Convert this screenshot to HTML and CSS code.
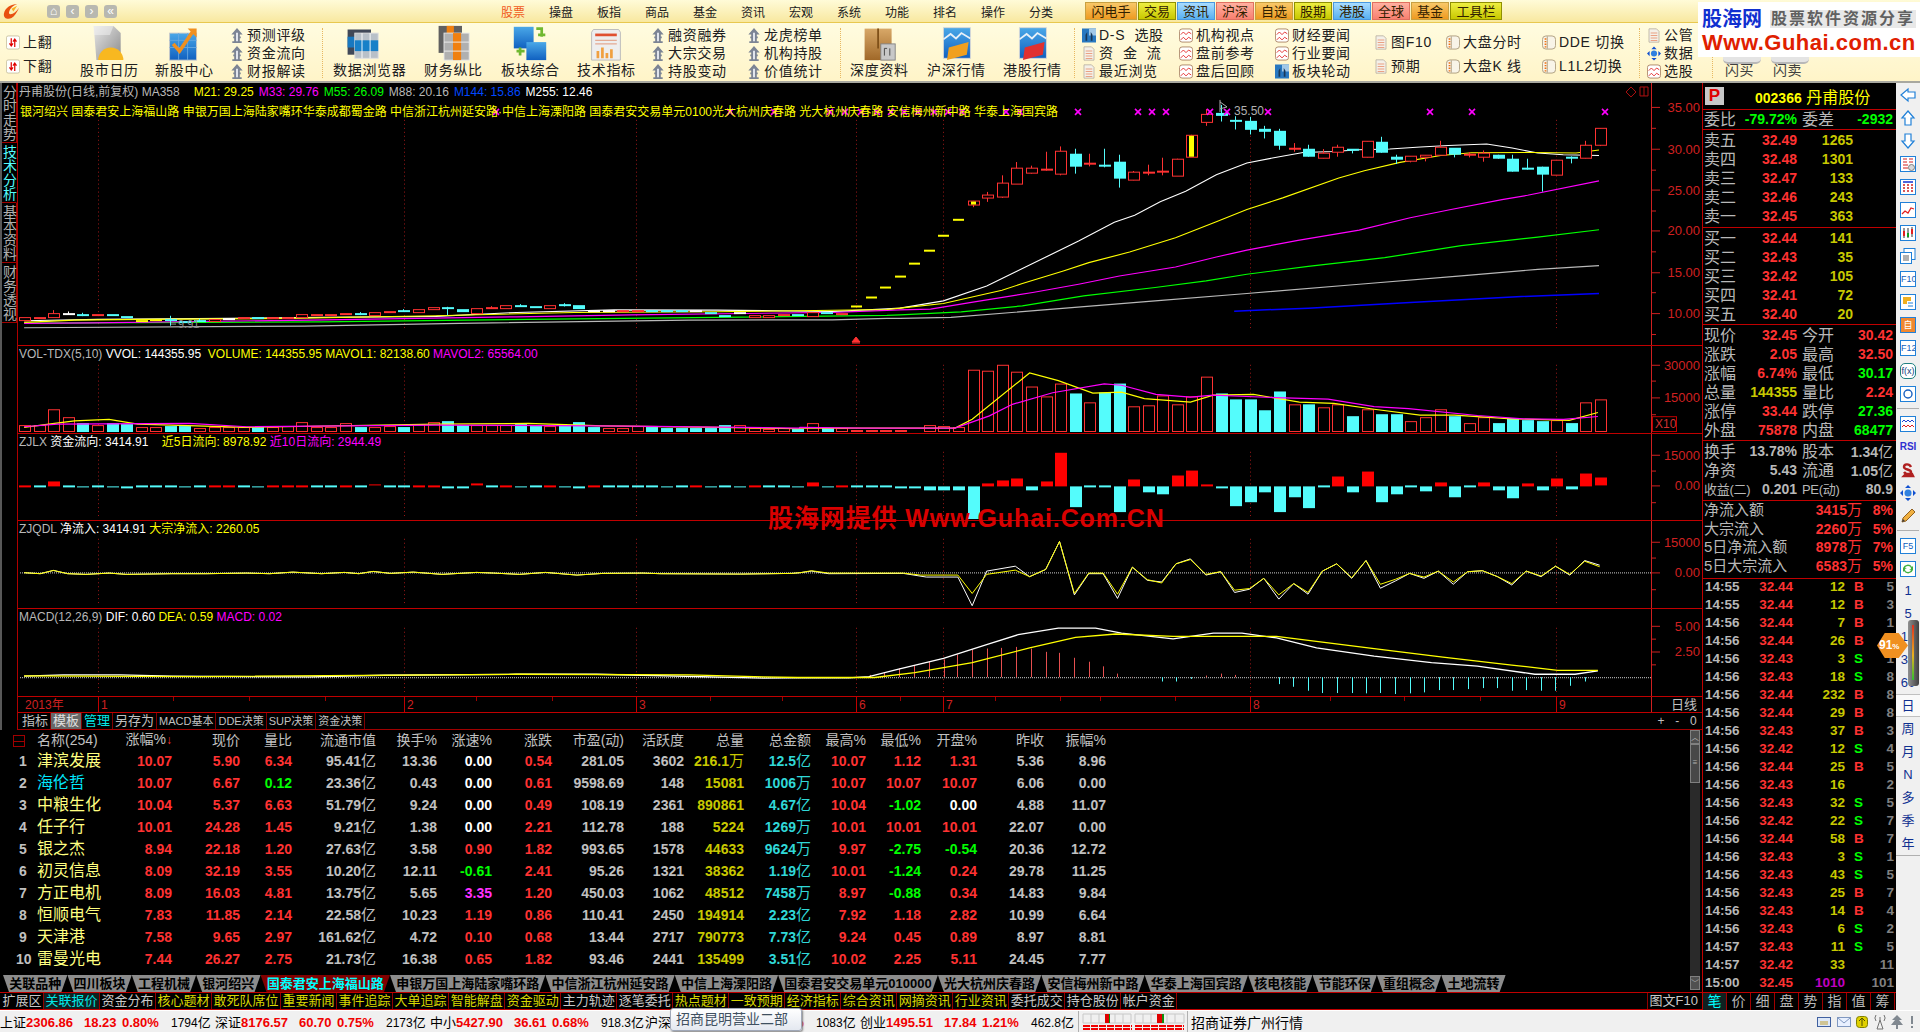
FILE: index.html
```html
<!DOCTYPE html>
<html lang="zh-CN">
<head>
<meta charset="utf-8">
<title>丹甫股份</title>
<link rel="stylesheet" href="styles.css">
</head>
<body>
<svg class="defs" width="0" height="0">
  <defs>
    <linearGradient id="gBlue" x1="0" y1="0" x2="0" y2="1"><stop offset="0" stop-color="#4aa8e8"/><stop offset="1" stop-color="#1060c0"/></linearGradient>
    <linearGradient id="gGray" x1="0" y1="0" x2="1" y2="1"><stop offset="0" stop-color="#e8e8e8"/><stop offset="1" stop-color="#8a8a8a"/></linearGradient>
    <linearGradient id="gBrown" x1="0" y1="0" x2="0" y2="1"><stop offset="0" stop-color="#d8a868"/><stop offset="1" stop-color="#a06828"/></linearGradient>
    <symbol id="tower" viewBox="0 0 14 16"><path d="M7 0 1 7h3v2H3v2h1v3H2v2h10v-2h-2v-3h1V9h-1V7h3z" fill="#7c8494"/><path d="M6 5h2v9H6z" fill="#e8ecf4"/></symbol>
    <symbol id="flip" viewBox="0 0 16 16"><rect x=".5" y=".5" width="15" height="15" rx="2" fill="#fff" stroke="#c8c0a0"/><path d="M6 3v8M4 9l2 3 2-3M10 13V5M8 7l2-3 2 3" fill="none" stroke="#e00000" stroke-width="1.4"/></symbol>
    <symbol id="doc" viewBox="0 0 16 18"><path d="M2 1h9l3 3v13H2z" fill="#f4f0e8" stroke="#b8b0a0"/><path d="M4 6h8M4 9h8M4 12h8M4 15h8" stroke="#e89070"/></symbol>
    <symbol id="rchart" viewBox="0 0 16 16"><rect x=".5" y=".5" width="15" height="15" rx="3" fill="#fff" stroke="#a88060"/><path d="M2 7l3-3 3 3 3-3 3 2M2 13l3-3 3 3 3-3 3 2" fill="none" stroke="#e02020"/></symbol>
    <symbol id="bino" viewBox="0 0 16 16"><rect width="16" height="16" fill="#2878c0"/><rect x="8" width="8" height="8" fill="#a0c8e8"/><path d="M4 14V7l2-3v10zM10 14V4l2 3v7z" fill="#183858"/></symbol>
    <symbol id="pill" viewBox="0 0 16 16"><rect x=".5" y=".5" width="15" height="15" rx="4" fill="#f8f4e8" stroke="#a89878"/><path d="M6 1v14" stroke="#a89878"/><path d="M3 4h2M3 7h2M3 10h2M3 13h2" stroke="#f07010" stroke-width="1.5"/></symbol>
    <symbol id="i-left" viewBox="0 0 16 16"><path d="M1 8l7-6v3h7v6H8v3z" fill="#fff" stroke="#2080d8" stroke-width="1.2"/></symbol>
    <symbol id="i-up" viewBox="0 0 16 16"><path d="M8 1l6 7h-3v7H5V8H2z" fill="#fff" stroke="#2080d8" stroke-width="1.2"/></symbol>
    <symbol id="i-down" viewBox="0 0 16 16"><path d="M8 15l6-7h-3V1H5v7H2z" fill="#fff" stroke="#2080d8" stroke-width="1.2"/></symbol>
    <symbol id="i-tabc" viewBox="0 0 16 16"><rect x=".5" y=".5" width="15" height="15" fill="#fff" stroke="#2080d8"/><path d="M3 3h4M9 3h4M3 6h4M9 6h4M3 9h5M3 12h5" stroke="#d02020"/><circle cx="11.500" cy="11.500" r="3" fill="#d8d8d8" stroke="#808080"/></symbol>
    <symbol id="i-list" viewBox="0 0 16 16"><rect x=".5" y=".5" width="15" height="15" fill="#fff" stroke="#2080d8"/><path d="M3 3h10" stroke="#1030d0" stroke-width="1.5"/><path d="M3 6h2M7 6h2M11 6h2M3 9h2M7 9h2M11 9h2M3 12h2M7 12h2M11 12h2" stroke="#d02020" stroke-width="1.5"/></symbol>
    <symbol id="i-line" viewBox="0 0 16 16"><rect x=".5" y=".5" width="15" height="15" fill="#fff" stroke="#2080d8"/><path d="M2 12l3-3 3 2 3-5 3 1" fill="none" stroke="#e02020" stroke-width="1.3"/></symbol>
    <symbol id="i-cand" viewBox="0 0 16 16"><rect x=".5" y=".5" width="15" height="15" fill="#fff" stroke="#2080d8"/><path d="M4 3v10M8 3v10M12 2v10" stroke="#303030"/><rect x="3" y="6" width="2" height="5" fill="#e02020"/><rect x="7" y="8" width="2" height="4" fill="#10a020"/><rect x="11" y="4" width="2" height="5" fill="#e02020"/></symbol>
    <symbol id="i-docs" viewBox="0 0 16 16"><rect x="4" y=".5" width="11" height="11" fill="#fff" stroke="#2080d8"/><rect x=".5" y="4.500" width="11" height="11" fill="#fff" stroke="#2080d8"/><path d="M3 8h6M3 10h6M3 12h6" stroke="#606060"/></symbol>
    <symbol id="i-yel" viewBox="0 0 16 16"><rect x=".5" y=".5" width="15" height="15" fill="#fff" stroke="#2080d8"/><path d="M3 3h8v4H7v3H3z" fill="#f0b020"/><path d="M8 9h5M8 12h5" stroke="#2080d8"/></symbol>
    <symbol id="i-circle" viewBox="0 0 16 16"><rect x=".5" y=".5" width="15" height="15" fill="#fff" stroke="#2080d8"/><circle cx="8" cy="8" r="4" fill="none" stroke="#1860c0" stroke-width="1.400"/></symbol>
    <symbol id="i-wave" viewBox="0 0 16 16"><rect x=".5" y=".5" width="15" height="15" fill="#fff" stroke="#2080d8"/><path d="M2 6l2-2 2 2 2-2 2 2 2-2 2 2" fill="none" stroke="#2040d0"/><path d="M2 11l2-2 2 2 2-2 2 2 2-2 2 2" fill="none" stroke="#e02020"/></symbol>
    <symbol id="i-dollar" viewBox="0 0 16 16"><path d="M4 14h9l-1-2H6zM11 5C9 1 4 2 4 5s7 2 7 5-5 3-7 0" fill="none" stroke="#b02020" stroke-width="2.400"/></symbol>
    <symbol id="i-move" viewBox="0 0 16 16"><path d="M8 0l3 3H5zM8 16l-3-3h6zM0 8l3-3v6zM16 8l-3 3V5z" fill="#1050d0"/><circle cx="8" cy="8" r="3.500" fill="#3080e0"/></symbol>
    <symbol id="i-pen" viewBox="0 0 16 16"><path d="M2 14l1-4L12 1l3 3-9 9z" fill="#f0b040" stroke="#906020"/><path d="M2 14l1-3 2 2z" fill="#404040"/></symbol>
    <symbol id="i-refresh" viewBox="0 0 16 16"><rect x=".5" y=".5" width="15" height="15" fill="#fff" stroke="#2080d8"/><path d="M3 7a5 5 0 0 1 9-1l1-1v4H9l2-1a3 3 0 0 0-6 0zM13 9a5 5 0 0 1-9 1l-1 1V7h4L5 8a3 3 0 0 0 6 0z" fill="#40b040"/></symbol>
  </defs>
</svg>

<div class="app">
  <header class="titlebar">
    <div class="brand">
      <svg class="logo" viewBox="0 0 18 18"><path d="M15 1C9 1 2 5 1 11c-1 5 4 7 8 5 3-2 6-6 8-11-3 4-6 7-9 7-2 0-2-2-1-4 1-3 5-6 8-7z" fill="#e85010"/><path d="M9 6l6-3-4 6z" fill="#f8b020"/></svg>
      <div class="navbtns">
        <span class="navbtn">⌂</span><span class="navbtn">‹</span><span class="navbtn">›</span><span class="navbtn">«</span>
      </div>
    </div>
    <nav class="menu">
      <a class="on">股票</a><a>操盘</a><a>板指</a><a>商品</a><a>基金</a><a>资讯</a><a>宏观</a><a>系统</a><a>功能</a><a>排名</a><a>操作</a><a>分类</a>
    </nav>
    <div class="quick">
      <a class="qk o w52">闪电手</a><a class="qk y">交易</a><a class="qk b">资讯</a><a class="qk p">沪深</a><a class="qk o">自选</a><a class="qk y">股期</a><a class="qk b">港股</a><a class="qk p">全球</a><a class="qk o">基金</a><a class="qk y w52">工具栏</a>
    </div>
  </header>

  <section class="toolbar">
    <div class="tstack two">
      <a class="titem"><svg class="sm"><use href="#flip"/></svg>上翻</a>
      <a class="titem"><svg class="sm"><use href="#flip"/></svg>下翻</a>
    </div>
    <a class="big"><svg viewBox="0 0 40 38"><path d="M3 0h22l8 8v30H6z" fill="url(#gGray)"/><path d="M3 0h22l-4 10-18 0z" fill="#f4f4f4" opacity=".5"/><path d="M8 38a14 14 0 0 1 28 0z" fill="#f8b820"/></svg><span>股市日历</span></a>
    <a class="big"><svg viewBox="0 0 40 38"><rect x="4" y="8" width="30" height="30" fill="url(#gBlue)" stroke="#c8c8c8"/><path d="M4 16h30M4 24h30M14 8v30M24 8v30" stroke="#68a8e0"/><path d="M8 20l7 8L30 6" fill="none" stroke="#f09020" stroke-width="4"/><path d="M24 3h10v10z" fill="#f09020"/></svg><span>新股中心</span></a>
    <div class="tstack">
      <a class="titem"><svg class="sm"><use href="#tower"/></svg>预测评级</a>
      <a class="titem"><svg class="sm"><use href="#tower"/></svg>资金流向</a>
      <a class="titem"><svg class="sm"><use href="#tower"/></svg>财报解读</a>
    </div>
    <i class="sep"></i>
    <a class="big"><svg viewBox="0 0 40 38"><rect x="4" y="4" width="26" height="28" fill="#404858"/><rect x="4" y="12" width="10" height="12" fill="#1878c0"/><rect x="12" y="8" width="26" height="28" fill="#b8c0c8" stroke="#e0e0e0"/><rect x="12" y="16" width="26" height="12" fill="#1880c8"/><path d="M20 8v28M29 8v28" stroke="#fff"/></svg><span>数据浏览器</span></a>
    <a class="big"><svg viewBox="0 0 40 38"><rect x="4" y="0" width="26" height="30" fill="#606060"/><rect x="13" y="0" width="8" height="30" fill="#f08010"/><rect x="10" y="8" width="28" height="30" fill="#b0b0b0" stroke="#e8e8e8"/><rect x="20" y="8" width="9" height="30" fill="#f08010"/><path d="M10 18h28M10 28h28" stroke="#f0f0f0"/></svg><span>财务纵比</span></a>
    <a class="big"><svg viewBox="0 0 40 38"><rect x="2" y="1" width="22" height="24" fill="url(#gBlue)"/><rect x="16" y="18" width="22" height="20" fill="url(#gBlue)"/><path d="M27 3h6v9M29 10h8M5 28h9M9 24v9" fill="none" stroke="#70b830" stroke-width="3"/></svg><span>板块综合</span></a>
    <a class="big"><svg viewBox="0 0 40 38"><path d="M6 4h28l2 3v31H4V7z" fill="#eee" stroke="#b8b8b8"/><path d="M8 10h24" stroke="#e05030" stroke-width="3"/><path d="M8 16h24M8 20h24" stroke="#e09070"/><path d="M11 36v-8M16 36v-12M21 36v-6M26 36v-10" stroke="#f0a040" stroke-width="3"/></svg><span>技术指标</span></a>
    <div class="tstack">
      <a class="titem"><svg class="sm"><use href="#tower"/></svg>融资融券</a>
      <a class="titem"><svg class="sm"><use href="#tower"/></svg>大宗交易</a>
      <a class="titem"><svg class="sm"><use href="#tower"/></svg>持股变动</a>
    </div>
    <div class="tstack">
      <a class="titem"><svg class="sm"><use href="#tower"/></svg>龙虎榜单</a>
      <a class="titem"><svg class="sm"><use href="#tower"/></svg>机构持股</a>
      <a class="titem"><svg class="sm"><use href="#tower"/></svg>价值统计</a>
    </div>
    <i class="sep"></i>
    <a class="big"><svg viewBox="0 0 40 38"><rect x="4" y="3" width="30" height="35" fill="url(#gBrown)"/><path d="M19 3v22" stroke="#805018" stroke-width="2"/><rect x="22" y="20" width="16" height="18" fill="#c8c8c8" stroke="#808080"/><path d="M26 25h3M26 25v8M32 25v8" stroke="#404040"/></svg><span>深度资料</span></a>
    <a class="big"><svg viewBox="0 0 40 38"><rect x="6" y="2" width="30" height="34" fill="url(#gBlue)" stroke="#d8d8d8"/><path d="M6 15l8-6 6 5 6-6 10 6" fill="none" stroke="#e8f0f8" stroke-width="2"/><path d="M12 24l22-6-2 14-22 6z" fill="#f0a020"/></svg><span>沪深行情</span></a>
    <a class="big"><svg viewBox="0 0 40 38"><rect x="6" y="2" width="30" height="34" fill="url(#gBlue)" stroke="#d8d8d8"/><path d="M6 15l8-6 6 5 6-6 10 6" fill="none" stroke="#e8f0f8" stroke-width="2"/><path d="M12 24l22-6-2 14-22 6z" fill="#e03030"/></svg><span>港股行情</span></a>
    <i class="sep"></i>
    <div class="tstack">
      <a class="titem"><svg class="sm"><use href="#bino"/></svg>D-S&nbsp; 选股</a>
      <a class="titem"><svg class="sm"><use href="#doc"/></svg>资&nbsp; 金&nbsp; 流</a>
      <a class="titem"><svg class="sm"><use href="#doc"/></svg>最近浏览</a>
    </div>
    <div class="tstack">
      <a class="titem"><svg class="sm"><use href="#rchart"/></svg>机构视点</a>
      <a class="titem"><svg class="sm"><use href="#rchart"/></svg>盘前参考</a>
      <a class="titem"><svg class="sm"><use href="#rchart"/></svg>盘后回顾</a>
    </div>
    <div class="tstack">
      <a class="titem"><svg class="sm"><use href="#rchart"/></svg>财经要闻</a>
      <a class="titem"><svg class="sm"><use href="#rchart"/></svg>行业要闻</a>
      <a class="titem"><svg class="sm"><use href="#bino"/></svg>板块轮动</a>
    </div>
    <div class="tstack two">
      <a class="titem"><svg class="sm"><use href="#doc"/></svg>图F10</a>
      <a class="titem"><svg class="sm"><use href="#doc"/></svg>预期</a>
    </div>
    <div class="tstack two">
      <a class="titem"><svg class="sm"><use href="#pill"/></svg>大盘分时</a>
      <a class="titem"><svg class="sm"><use href="#pill"/></svg>大盘K 线</a>
    </div>
    <div class="tstack two">
      <a class="titem"><svg class="sm"><use href="#pill"/></svg>DDE&nbsp;切换</a>
      <a class="titem"><svg class="sm"><use href="#pill"/></svg>L1L2切换</a>
    </div>
    <i class="sep"></i>
    <div class="tstack">
      <a class="titem"><svg class="sm"><use href="#doc"/></svg>公管</a>
      <a class="titem"><svg class="sm"><use href="#i-move"/></svg>数据</a>
      <a class="titem"><svg class="sm"><use href="#rchart"/></svg>选股</a>
    </div>
    <i class="sep"></i>
    <a class="flash">闪买</a>
    <a class="flash">闪卖</a>
  </section>

  <aside class="sitelogo">
    <div class="site-top"><b>股海网</b><span>股票软件资源分享</span></div>
    <div class="site-url">Www.Guhai.com.cn</div>
  </aside>

  <main class="workspace">
    <div class="leftcol">
      <div class="chartrow">
        <div class="sidetabs">
          <a>分时走势</a><a class="on">技术分析</a><a>基本资料</a><a>财务透视</a>
        </div>
        <div class="charts">
          <section class="panel p-main">
            <svg id="cMain" viewBox="18 83 1684 263" preserveAspectRatio="none"></svg>
            <div class="ptitle t1"><span class="gray">丹甫股份(日线,前复权) MA358</span><span class="yel a1">M21: 29.25</span><span class="mag a2">M33: 29.76</span><span class="grn a2">M55: 26.09</span><span class="gray a2">M88: 20.16</span><span class="blu a2">M144: 15.86</span><span class="whi a3">M255: 12.46</span></div>
            <div class="ptitle t2 yel">银河绍兴 国泰君安上海福山路 申银万国上海陆家嘴环华泰成都蜀金路 中信浙江杭州延安路·中信上海溧阳路 国泰君安交易单元0100光大杭州庆春路 光大杭州庆春路 安信梅州新中路 华泰上海国宾路</div>
          </section>
          <section class="panel p-sub">
            <svg id="cVol" viewBox="18 346 1684 88" preserveAspectRatio="none"></svg>
            <div class="ptitle"><span class="gray">VOL-TDX(5,10)</span> <span class="whi">VVOL: 144355.95</span> &nbsp;<span class="yel">VOLUME: 144355.95</span> <span class="yel">MAVOL1: 82138.60</span> <span class="mag">MAVOL2: 65564.00</span></div>
          </section>
          <section class="panel p-sub p-87">
            <svg id="cZjlx" viewBox="18 434 1684 87" preserveAspectRatio="none"></svg>
            <div class="ptitle"><span class="gray">ZJLX</span> <span class="whi">资金流向: 3414.91</span> &nbsp; &nbsp;<span class="yel">近5日流向: 8978.92</span> <span class="mag">近10日流向: 2944.49</span></div>
          </section>
          <section class="panel p-sub">
            <svg id="cZjqdl" viewBox="18 521 1684 88" preserveAspectRatio="none"></svg>
            <div class="ptitle"><span class="gray">ZJQDL</span> <span class="whi">净流入: 3414.91</span> <span class="yel">大宗净流入: 2260.05</span></div>
          </section>
          <section class="panel p-sub">
            <svg id="cMacd" viewBox="18 609 1684 88" preserveAspectRatio="none"></svg>
            <div class="ptitle"><span class="gray">MACD(12,26,9)</span> <span class="whi">DIF: 0.60</span> <span class="yel">DEA: 0.59</span> <span class="mag">MACD: 0.02</span></div>
          </section>
          <section class="dateaxis">
            <svg id="cDate" viewBox="18 697 1684 15" preserveAspectRatio="none"></svg>
          </section>
          <section class="tplbar">
            <a>指标</a><a class="sel">模板</a><a class="cy">管理</a><a>另存为</a><a class="tiny">MACD基本</a><a class="tiny">DDE决策</a><a class="tiny">SUP决策</a><a class="tiny">资金决策</a>
            <div class="tplctl"><span>+</span><span>-</span><span>0</span></div>
          </section>
        </div>
      </div>

      <div class="tablearea">
        <div class="tablecol">
          <table class="rank">
            <thead>
              <tr><th><i class="boxico"></i></th><th>名称(254)</th><th>涨幅%<em>↓</em></th><th>现价</th><th>量比</th><th>流通市值</th><th>换手%</th><th>涨速%</th><th>涨跌</th><th>市盈(动)</th><th>活跃度</th><th>总量</th><th>总金额</th><th>最高%</th><th>最低%</th><th>开盘%</th><th>昨收</th><th>振幅%</th></tr>
            </thead>
            <tbody>
              <tr><td>1</td><td>津滨发展</td><td>10.07</td><td>5.90</td><td>6.34</td><td>95.41<i>亿</i></td><td>13.36</td><td>0.00</td><td>0.54</td><td>281.05</td><td>3602</td><td>216.1<i>万</i></td><td>12.5<i>亿</i></td><td>10.07</td><td>1.12</td><td>1.31</td><td>5.36</td><td>8.96</td></tr>
              <tr><td>2</td><td class="cy">海伦哲</td><td>10.07</td><td>6.67</td><td class="gn">0.12</td><td>23.36<i>亿</i></td><td>0.43</td><td>0.00</td><td>0.61</td><td>9598.69</td><td>148</td><td>15081</td><td>1006<i>万</i></td><td>10.07</td><td>10.07</td><td>10.07</td><td>6.06</td><td>0.00</td></tr>
              <tr><td>3</td><td>中粮生化</td><td>10.04</td><td>5.37</td><td>6.63</td><td>51.79<i>亿</i></td><td>9.24</td><td>0.00</td><td>0.49</td><td>108.19</td><td>2361</td><td>890861</td><td>4.67<i>亿</i></td><td>10.04</td><td class="gn">-1.02</td><td class="wh">0.00</td><td>4.88</td><td>11.07</td></tr>
              <tr><td>4</td><td>任子行</td><td>10.01</td><td>24.28</td><td>1.45</td><td>9.21<i>亿</i></td><td>1.38</td><td>0.00</td><td>2.21</td><td>112.78</td><td>188</td><td>5224</td><td>1269<i>万</i></td><td>10.01</td><td>10.01</td><td>10.01</td><td>22.07</td><td>0.00</td></tr>
              <tr><td>5</td><td>银之杰</td><td>8.94</td><td>22.18</td><td>1.20</td><td>27.63<i>亿</i></td><td>3.58</td><td class="rd">0.90</td><td>1.82</td><td>993.65</td><td>1578</td><td>44633</td><td>9624<i>万</i></td><td>9.97</td><td class="gn">-2.75</td><td class="gn">-0.54</td><td>20.36</td><td>12.72</td></tr>
              <tr><td>6</td><td>初灵信息</td><td>8.09</td><td>32.19</td><td>3.55</td><td>10.20<i>亿</i></td><td>12.11</td><td class="gn">-0.61</td><td>2.41</td><td>95.26</td><td>1321</td><td>38362</td><td>1.19<i>亿</i></td><td>10.01</td><td class="gn">-1.24</td><td>0.24</td><td>29.78</td><td>11.25</td></tr>
              <tr><td>7</td><td>方正电机</td><td>8.09</td><td>16.03</td><td>4.81</td><td>13.75<i>亿</i></td><td>5.65</td><td class="mg">3.35</td><td>1.20</td><td>450.03</td><td>1062</td><td>48512</td><td>7458<i>万</i></td><td>8.97</td><td class="gn">-0.88</td><td>0.34</td><td>14.83</td><td>9.84</td></tr>
              <tr><td>8</td><td>恒顺电气</td><td>7.83</td><td>11.85</td><td>2.14</td><td>22.58<i>亿</i></td><td>10.23</td><td class="rd">1.19</td><td>0.86</td><td>110.41</td><td>2450</td><td>194914</td><td>2.23<i>亿</i></td><td>7.92</td><td>1.18</td><td>2.82</td><td>10.99</td><td>6.64</td></tr>
              <tr><td>9</td><td>天津港</td><td>7.58</td><td>9.65</td><td>2.97</td><td>161.62<i>亿</i></td><td>4.72</td><td class="rd">0.10</td><td>0.68</td><td>13.44</td><td>2717</td><td>790773</td><td>7.73<i>亿</i></td><td>9.24</td><td>0.45</td><td>0.89</td><td>8.97</td><td>8.81</td></tr>
              <tr><td>10</td><td>雷曼光电</td><td>7.44</td><td>26.27</td><td>2.75</td><td>21.73<i>亿</i></td><td>16.38</td><td class="rd">0.65</td><td>1.82</td><td>93.46</td><td>2441</td><td>135499</td><td>3.51<i>亿</i></td><td>10.02</td><td>2.25</td><td>5.11</td><td>24.45</td><td>7.77</td></tr>
            </tbody>
          </table>
          <nav class="sheets">
            <a>关联品种</a><a>四川板块</a><a>工程机械</a><a>银河绍兴</a><a class="on">国泰君安上海福山路</a><a>申银万国上海陆家嘴环路</a><a>中信浙江杭州延安路</a><a>中信上海溧阳路</a><a>国泰君安交易单元010000</a><a>光大杭州庆春路</a><a>安信梅州新中路</a><a>华泰上海国宾路</a><a>核电核能</a><a>节能环保</a><a>重组概念</a><a>土地流转</a>
          </nav>
        </div>
        <div class="vscroll"><span class="sb-btn">︿</span><span class="sb-thumb">≡</span><span class="sb-fill"></span><span class="sb-btn">﹀</span></div>
      </div>

      <nav class="extbar">
        <a class="l">扩展区</a><a class="cy">关联报价</a><a class="l">资金分布</a><a>核心题材</a><a>敢死队席位</a><a>重要新闻</a><a>事件追踪</a><a>大单追踪</a><a>智能解盘</a><a>资金驱动</a><a class="l">主力轨迹</a><a class="l">逐笔委托</a><a>热点题材</a><a>一致预期</a><a>经济指标</a><a>综合资讯</a><a>网摘资讯</a><a>行业资讯</a><a class="l">委托成交</a><a class="l">持仓股份</a><a class="l">帐户资金</a>
        <span class="extgap"></span>
        <a class="l f10">图文F10</a>
      </nav>
    </div>

    <aside class="quote">
      <div class="q-head"><span class="pico">P</span><span class="q-name"><b>002366</b> 丹甫股份</span></div>
      <div class="q-ratio"><span>委比</span><b class="gn">-79.72%</b><span>委差</span><b class="gn">-2932</b></div>
      <div class="q-block b1">
        <div class="book"><span>卖五</span><b class="rd">32.49</b><b class="ye">1265</b></div>
        <div class="book"><span>卖四</span><b class="rd">32.48</b><b class="ye">1301</b></div>
        <div class="book"><span>卖三</span><b class="rd">32.47</b><b class="ye">133</b></div>
        <div class="book"><span>卖二</span><b class="rd">32.46</b><b class="ye">243</b></div>
        <div class="book"><span>卖一</span><b class="rd">32.45</b><b class="ye">363</b></div>
      </div>
      <div class="q-block">
        <div class="book"><span>买一</span><b class="rd">32.44</b><b class="ye">141</b></div>
        <div class="book"><span>买二</span><b class="rd">32.43</b><b class="ye">35</b></div>
        <div class="book"><span>买三</span><b class="rd">32.42</b><b class="ye">105</b></div>
        <div class="book"><span>买四</span><b class="rd">32.41</b><b class="ye">72</b></div>
        <div class="book"><span>买五</span><b class="rd">32.40</b><b class="ye">20</b></div>
      </div>
      <div class="q-block">
        <div class="stat"><span>现价</span><b class="rd">32.45</b><span>今开</span><b class="rd">30.42</b></div>
        <div class="stat"><span>涨跌</span><b class="rd">2.05</b><span>最高</span><b class="rd">32.50</b></div>
        <div class="stat"><span>涨幅</span><b class="rd">6.74%</b><span>最低</span><b class="gn">30.17</b></div>
        <div class="stat"><span>总量</span><b class="ye">144355</b><span>量比</span><b class="rd">2.24</b></div>
        <div class="stat"><span>涨停</span><b class="rd">33.44</b><span>跌停</span><b class="gn">27.36</b></div>
        <div class="stat"><span>外盘</span><b class="rd">75878</b><span>内盘</span><b class="gn">68477</b></div>
      </div>
      <div class="q-block q-gray">
        <div class="stat"><span>换手</span><b>13.78%</b><span>股本</span><b>1.34<i>亿</i></b></div>
        <div class="stat"><span>净资</span><b>5.43</b><span>流通</span><b>1.05<i>亿</i></b></div>
        <div class="stat"><span class="nar">收益(二)</span><b>0.201</b><span class="nar">PE(动)</span><b>80.9</b></div>
      </div>
      <div class="q-block q-fund">
        <div class="fund"><span>净流入额</span><b class="rd">3415<i>万</i></b><b class="rd">8%</b></div>
        <div class="fund"><span>大宗流入</span><b class="rd">2260<i>万</i></b><b class="rd">5%</b></div>
        <div class="fund"><span>5日净流入额</span><b class="rd">8978<i>万</i></b><b class="rd">7%</b></div>
        <div class="fund"><span>5日大宗流入</span><b class="rd">6583<i>万</i></b><b class="rd">5%</b></div>
      </div>
      <div class="ticks">
        <div class="tick"><span>14:55</span><b>32.44</b><em>12</em><u class="bb">B</u><s>5</s></div>
        <div class="tick"><span>14:55</span><b>32.44</b><em>12</em><u class="bb">B</u><s>3</s></div>
        <div class="tick"><span>14:56</span><b>32.44</b><em>7</em><u class="bb">B</u><s>1</s></div>
        <div class="tick"><span>14:56</span><b>32.44</b><em>26</em><u class="bb">B</u><s>1</s></div>
        <div class="tick"><span>14:56</span><b>32.43</b><em>3</em><u class="ss">S</u><s>1</s></div>
        <div class="tick"><span>14:56</span><b>32.43</b><em>18</em><u class="ss">S</u><s>8</s></div>
        <div class="tick"><span>14:56</span><b>32.44</b><em>232</em><u class="bb">B</u><s>8</s></div>
        <div class="tick"><span>14:56</span><b>32.44</b><em>29</em><u class="bb">B</u><s>8</s></div>
        <div class="tick"><span>14:56</span><b>32.43</b><em>37</em><u class="bb">B</u><s>3</s></div>
        <div class="tick"><span>14:56</span><b>32.42</b><em>12</em><u class="ss">S</u><s>4</s></div>
        <div class="tick"><span>14:56</span><b>32.44</b><em>25</em><u class="bb">B</u><s>5</s></div>
        <div class="tick"><span>14:56</span><b>32.43</b><em>16</em><u></u><s>2</s></div>
        <div class="tick"><span>14:56</span><b>32.43</b><em>32</em><u class="ss">S</u><s>5</s></div>
        <div class="tick"><span>14:56</span><b>32.42</b><em>22</em><u class="ss">S</u><s>7</s></div>
        <div class="tick"><span>14:56</span><b>32.44</b><em>58</em><u class="bb">B</u><s>7</s></div>
        <div class="tick"><span>14:56</span><b>32.43</b><em>3</em><u class="ss">S</u><s>1</s></div>
        <div class="tick"><span>14:56</span><b>32.43</b><em>43</em><u class="ss">S</u><s>5</s></div>
        <div class="tick"><span>14:56</span><b>32.43</b><em>25</em><u class="bb">B</u><s>7</s></div>
        <div class="tick"><span>14:56</span><b>32.43</b><em>14</em><u class="bb">B</u><s>4</s></div>
        <div class="tick"><span>14:56</span><b>32.43</b><em>6</em><u class="ss">S</u><s>2</s></div>
        <div class="tick"><span>14:57</span><b>32.43</b><em>11</em><u class="ss">S</u><s>5</s></div>
        <div class="tick"><span>14:57</span><b>32.42</b><em>33</em><u></u><s>11</s></div>
        <div class="tick"><span>15:00</span><b>32.45</b><em class="big-v">1010</em><u></u><s>101</s></div>
      </div>
      <nav class="qtabs"><a class="on">笔</a><a>价</a><a>细</a><a>盘</a><a>势</a><a>指</a><a>值</a><a>筹</a></nav>
    </aside>

    <aside class="iconbar">
      <svg><use href="#i-left"/></svg><svg><use href="#i-up"/></svg><svg><use href="#i-down"/></svg>
      <svg><use href="#i-tabc"/></svg><svg><use href="#i-list"/></svg><svg><use href="#i-line"/></svg><svg><use href="#i-cand"/></svg><svg><use href="#i-docs"/></svg>
      <span class="ibox">F10</span><svg><use href="#i-yel"/></svg><span class="ibox org">自</span><span class="ibox">F12</span><span class="ibox grn2">f(x)</span><svg><use href="#i-circle"/></svg>
      <hr>
      <svg><use href="#i-wave"/></svg><span class="rsi">RSI</span><svg><use href="#i-dollar"/></svg><svg><use href="#i-move"/></svg><svg><use href="#i-pen"/></svg>
      <hr>
      <span class="ibox">F5</span><svg><use href="#i-refresh"/></svg>
      <div class="periods"><a>1</a><a>5</a><a>15</a><a>30</a><a>60</a><a class="on">日</a><a>周</a><a>月</a><a>N</a><a>多</a><a>季</a><a>年</a></div>
    </aside>
  </main>

  <footer class="status">
    <div class="idx"><span>上证</span><b>2306.86</b><b>18.23</b><b>0.80%</b><small>1794<i>亿</i></small></div>
    <div class="idx"><span>深证</span><b>8176.57</b><b>60.70</b><b>0.75%</b><small>2173<i>亿</i></small></div>
    <div class="idx"><span>中小</span><b>5427.90</b><b>36.61</b><b>0.68%</b><small>918.3<i>亿</i></small></div>
    <div class="idx"><span>沪深</span><b>2566.17</b><b>20.52</b><b>0.81%</b><small>1083<i>亿</i></small></div>
    <div class="idx"><span>创业</span><b>1495.51</b><b>17.84</b><b>1.21%</b><small>462.8<i>亿</i></small></div>
    <div class="meter">
      <svg viewBox="0 0 104 18" width="104" height="18">
        <path d="M1 1h48v9H1zM53 1h49v9H53z" fill="#f0f0f0" stroke="#c8c8c8"/>
        <path d="M9 1v9M17 1v9M33 1v9M41 1v9M61 1v9M69 1v9M85 1v9M93 1v9" stroke="#c8c8c8"/>
        <rect x="23" y="1" width="4" height="9" fill="#e00000"/><rect x="27" y="1" width="1" height="9" fill="#109010"/>
        <rect x="75" y="1" width="5" height="9" fill="#e00000"/><rect x="80" y="1" width="2" height="9" fill="#109010"/>
        <path d="M1 13h49M1 16h49M53 13h49M53 16h49" stroke="#f00000" stroke-width="2" stroke-dasharray="7 1"/>
      </svg>
    </div>
    <div class="broker">招商证券广州行情</div>
    <div class="trayicons">
      <svg viewBox="0 0 14 10" width="14" height="10"><rect x=".5" y=".5" width="13" height="9" fill="#dde8f8" stroke="#4060a0"/><path d="M3 5h8M3 7h8" stroke="#c0a030"/></svg>
      <svg viewBox="0 0 14 10" width="14" height="10"><rect x=".5" y=".5" width="13" height="9" fill="#e8f0ff" stroke="#8098c0"/><path d="M1 1l6 5 6-5" fill="none" stroke="#8098c0"/></svg>
      <svg viewBox="0 0 12 12" width="12" height="12"><rect x=".5" y=".5" width="11" height="11" rx="3" fill="#e0d000" stroke="#808000"/><path d="M6 2v8M3 5l3-3 3 3" fill="none" stroke="#505000"/></svg>
      <svg viewBox="0 0 12 16" width="12" height="16"><path d="M6 6L3 15h6zM6 3v3M2 1a5 5 0 0 0 0 6M10 1a5 5 0 0 1 0 6" fill="none" stroke="#707070"/></svg>
      <svg viewBox="0 0 12 14" width="12" height="14"><path d="M6 0L1 5h3L0 10h5v4h2v-4h5L8 5h3z" fill="#808890"/></svg>
      <svg viewBox="0 0 6 14" width="6" height="14"><path d="M2 1h2v8H2zM2 11h2v2H2z" fill="#808890"/></svg>
    </div>
  </footer>

  <div class="watermark">股海网提供 Www.Guhai.Com.CN</div>
  <div class="tooltip">招商昆明营业二部</div>
  <div class="slider"><span></span></div>
  <div class="cpu">91<small>%</small></div>
</div>
<script src="script.js"></script>
</body>
</html>
```

FILE: styles.css
```css
* { box-sizing: border-box; margin: 0; padding: 0; }
html, body { width: 1920px; height: 1032px; overflow: hidden; background: #000; }
body { font-family: "Liberation Sans", "Noto Sans CJK SC", sans-serif; font-size: 14px; color: #c0c0c0; }
a { color: inherit; text-decoration: none; }
i, em { font-style: normal; }
.defs { position: absolute; }
.app { position: relative; width: 1920px; height: 1032px; display: flex; flex-direction: column; }

/* title bar */
.titlebar { height: 23px; flex: none; display: flex; align-items: center; background: linear-gradient(#fffbd8, #f8e8a0); border-bottom: 1px solid #e8c850; color: #202020; font-size: 12px; }
.brand { width: 489px; display: flex; align-items: center; padding-left: 3px; }
.logo { width: 17px; height: 17px; }
.navbtns { display: flex; gap: 6px; margin-left: 27px; }
.navbtn { width: 13px; height: 13px; background: #b8b8b0; color: #fff; border-radius: 3px; font-size: 12px; line-height: 12px; text-align: center; }
.menu { width: 596px; display: flex; }
.menu a { width: 48px; text-align: center; }
.menu .on { color: #f05a20; }
.quick { display: flex; gap: 1px; font-size: 13px; }
.qk { width: 38px; height: 18px; line-height: 17px; text-align: center; border: 1px solid #c8a040; color: #302000; }
.w52 { width: 52px; }
.qk.o { background: linear-gradient(#f8c868, #ee9a20); }
.qk.y { background: linear-gradient(#eeee40, #c8c800); border-color: #909000; }
.qk.b { background: linear-gradient(#a8dcff, #58b0f0); border-color: #4898e0; }
.qk.p { background: linear-gradient(#ffb0a0, #f88070); border-color: #e07060; }

/* toolbar */
.toolbar { height: 58px; flex: none; display: grid; grid-template-columns: 74px 75px 75px 92px 11px 91px 77px 76px 74px 96px 93px 10px 77px 76px 71px 8px 97px 96px 99px 72px 96px 97px 8px 65px 13px 48px 48px; padding-left: 6px; background: linear-gradient(#fffce0, #fff4c8); color: #202020; font-size: 14px; line-height: 18px; }
.tstack { display: flex; flex-direction: column; justify-content: flex-start; padding-top: 3px; letter-spacing: .7px; white-space: nowrap; }
.tstack.two { padding-top: 10px; gap: 6px; }
.titem { display: flex; align-items: center; gap: 3px; height: 18px; }
.sm { width: 14px; height: 15px; flex: none; }
.big { position: relative; display: flex; flex-direction: column; align-items: flex-start; white-space: nowrap; letter-spacing: .7px; }
.big svg { width: 36px; height: 36px; margin: 2px 0 0 11px; }
.big span { position: absolute; top: 38px; left: 0; height: 19px; line-height: 19px; }
.sep { width: 1px; height: 50px; margin-top: 5px; border-left: 1px dotted #e8b860; }
.flash { position: relative; padding-top: 38px; letter-spacing: .5px; color: #404040; }
.flash::before { content: ""; position: absolute; left: -2px; top: 30px; width: 38px; height: 9px; background: #e4e4e4; border-radius: 0 0 5px 5px; border-bottom: 2px solid #b8b8b8; }
.sitelogo { position: absolute; top: 2px; right: 0; width: 222px; height: 55px; background: #fff; padding: 6px 4px 0 4px; }
.site-top { display: flex; align-items: center; gap: 8px; height: 22px; }
.site-top b { font-size: 20px; line-height: 22px; color: #1030d0; }
.site-top span { font-size: 16px; letter-spacing: 2px; line-height: 18px; padding: 0 1px; color: #606060; background: #e8e8e8; white-space: nowrap; font-weight: 700; }
.site-url { font-size: 22px; font-weight: 700; color: #e02000; line-height: 25px; letter-spacing: .5px; white-space: nowrap; }

/* workspace */
.workspace { height: 929px; flex: none; display: flex; border-top: 2px solid #a8a8a0; }
.leftcol { width: 1702px; display: flex; flex-direction: column; }
.chartrow { height: 647px; flex: none; display: flex; }
.sidetabs { width: 17px; display: flex; flex-direction: column; border-left: 2px solid #585858; flex: none; }
.sidetabs a { height: 60px; width: 15px; writing-mode: vertical-rl; text-orientation: upright; text-align: center; font-size: 14px; line-height: 15px; letter-spacing: 0; border-bottom: 1px solid #a00000; border-right: 1px solid #a00000; color: #b0b0b0; white-space: nowrap; }
.sidetabs .on { color: #54fcfc; border-right-color: #000; }
.charts { flex: 1; border-left: 1px solid #b00000; display: flex; flex-direction: column; }
.panel { position: relative; height: 88px; flex: none; border-bottom: 1px solid #c00000; }
.p-main { height: 263px; }
.p-87 { height: 87px; }
.panel svg, .dateaxis svg { position: absolute; left: 0; top: 0; width: 100%; height: 100%; display: block; }
.ptitle { position: relative; font-size: 12px; line-height: 16px; padding-left: 1px; white-space: nowrap; }
.t1 { line-height: 18px; display: flex; }
.t2 { margin-top: 2px; line-height: 18px; padding-left: 2px; }
.a1 { margin-left: 14px; }
.a2 { margin-left: 5px; }
.a3 { margin-left: 5px; }
.gray { color: #b8b8b8; }
.whi { color: #fff; }
.yel { color: #ffff00; }
.mag { color: #ff00ff; }
.grn { color: #00ff00; }
.blu { color: #0048ff; }
.dateaxis { position: relative; height: 16px; flex: none; border-bottom: 1px solid #c00000; }
.tplbar { height: 17px; flex: none; display: flex; align-items: stretch; padding-left: 2px; border-bottom: 1px solid #a00000; font-size: 13px; line-height: 16px; }
.tplbar a { padding: 0 2px; border-right: 1px solid #800000; white-space: nowrap; }
.tplbar .sel { background: #686868; color: #e0e0e0; }
.tplbar .cy { color: #00e8e8; }
.tplbar .tiny { font-size: 11px; }
.tplctl { margin-left: auto; display: flex; width: 50px; justify-content: space-around; color: #c0c0c0; font-size: 12px; }

/* table */
.tablearea { height: 262px; flex: none; display: flex; }
.tablecol { width: 1690px; display: flex; flex-direction: column; }
.rank { width: 1106px; table-layout: fixed; border-collapse: collapse; flex: none; }
.rank th { height: 19px; padding: 0; line-height: 19px; font-weight: 400; font-size: 14px; color: #c0c0c0; text-align: right; white-space: nowrap; }
.rank td { height: 22px; padding: 0; line-height: 20px; font-size: 14px; font-weight: 700; text-align: right; color: #c0c0c0; white-space: nowrap; overflow: visible; }
.rank i { font-weight: 400; font-size: 15px; line-height: 15px; }
.rank em { color: #ff3030; font-size: 12px; }
.rank th:nth-child(1), .rank td:nth-child(1) { width: 30px; text-align: center; padding-left: 16px; }
.rank th:nth-child(1) { padding-left: 8px; }
.rank th:nth-child(2), .rank td:nth-child(2) { width: 68px; text-align: left; padding-left: 7px; }
.rank th:nth-child(3) { width: 74px; }
.rank th:nth-child(4) { width: 68px; }
.rank th:nth-child(5) { width: 52px; }
.rank th:nth-child(6) { width: 84px; }
.rank th:nth-child(7) { width: 61px; }
.rank th:nth-child(8) { width: 55px; }
.rank th:nth-child(9) { width: 60px; }
.rank th:nth-child(10) { width: 72px; }
.rank th:nth-child(11) { width: 60px; }
.rank th:nth-child(12) { width: 60px; }
.rank th:nth-child(13) { width: 67px; }
.rank th:nth-child(14) { width: 55px; }
.rank th:nth-child(15) { width: 55px; }
.rank th:nth-child(16) { width: 56px; }
.rank th:nth-child(17) { width: 67px; }
.rank th:nth-child(18) { width: 62px; }
.rank td:nth-child(2) { font-size: 16px; font-weight: 400; color: #ffff80; }
.rank td:nth-child(3), .rank td:nth-child(4), .rank td:nth-child(5), .rank td:nth-child(9), .rank td:nth-child(14), .rank td:nth-child(15), .rank td:nth-child(16) { color: #ff3232; }
.rank td:nth-child(8) { color: #fff; }
.rank td:nth-child(12) { color: #c8c800; }
.rank td:nth-child(13) { color: #30d8d8; }
.rank td.cy { color: #00e8ff; }
.rank td.gn { color: #00ff00; }
.rank td.rd { color: #ff3232; }
.rank td.mg { color: #ff30ff; }
.rank td.wh { color: #fff; }
.boxico { display: inline-block; width: 12px; height: 12px; border: 1px solid #a00000; vertical-align: middle; background: linear-gradient(#000 5px, #a00000 5px, #a00000 6px, #000 6px); }
.sheets { height: 17px; margin-top: auto; display: flex; flex: none; padding-left: 3px; }
.sheets a { height: 17px; line-height: 17px; padding: 0 6.2px; background: #8c8c8c; color: #000; font-size: 13px; font-weight: 700; white-space: nowrap; clip-path: polygon(0 0, 100% 0, calc(100% - 6px) 100%, 6px 100%); }
.sheets .on { background: #800000; color: #00ffff; }
.vscroll { width: 10px; display: flex; flex-direction: column; background: #2a2a2a; color: #b0b0b0; font-size: 8px; line-height: 14px; text-align: center; height: 260px; }
.sb-btn { height: 14px; background: #505050; border: 1px solid #808080; }
.sb-thumb { height: 39px; background: #484848; border: 1px solid #808080; line-height: 36px; }
.sb-fill { flex: 1; }
.extbar { height: 18px; flex: none; display: flex; border-top: 1px solid #c00000; border-bottom: 1px solid #c00000; font-size: 13px; line-height: 16px; color: #d8d800; padding-left: 1px; }
.extbar a { padding: 0 1.5px; border-right: 1px solid #900000; white-space: nowrap; }
.extbar .l { color: #c8c8c8; }
.extbar .cy { color: #00e8e8; background: #102020; }
.extgap { flex: 1; }
.extbar .f10 { border-right: 0; border-left: 1px solid #900000; padding-right: 4px; }

/* quote panel */
.quote { width: 194px; flex: none; border-left: 1px solid #c00000; font-size: 16px; color: #b8b8b8; display: flex; flex-direction: column; height: 927px; }
.q-head { height: 27px; flex: none; display: flex; align-items: center; padding-left: 2px; border-bottom: 1px solid #c00000; }
.pico { width: 19px; height: 18px; background: #c8c8c8; color: #e00000; font-weight: 700; font-size: 17px; line-height: 18px; text-align: center; }
.q-name { margin-left: 31px; color: #ffff00; font-size: 16px; white-space: nowrap; }
.q-name b { font-size: 14px; letter-spacing: 0; }
.q-ratio { height: 20px; flex: none; display: grid; grid-template-columns: 40px 53px 5px 40px 51px; line-height: 19px; padding-left: 1px; border-bottom: 1px solid #c00000; }
.q-ratio b, .book b, .stat b, .fund b { text-align: right; font-size: 14px; white-space: nowrap; }
.q-ratio span:nth-of-type(2) { grid-column: 4; }
.gn { color: #00ff00; }
.rd { color: #ff3232; }
.ye { color: #c8c800; }
.q-block { flex: none; border-bottom: 1px solid #c00000; padding-top: 1px; }
.q-block.b1 { padding-bottom: 1px; }
.q-gray { padding-bottom: 1px; }
.q-fund { padding-top: 0; padding-bottom: 3px; }
.book { height: 19px; line-height: 19px; display: grid; grid-template-columns: 40px 53px 56px; padding-left: 1px; }
.stat { height: 19px; line-height: 19px; display: grid; grid-template-columns: 40px 53px 5px 40px 51px; padding-left: 1px; white-space: nowrap; }
.stat span:nth-of-type(2) { grid-column: 4; }
.stat .nar { font-size: 13px; letter-spacing: -.3px; }
.q-gray b { color: #b8b8b8; }
.stat i, .fund i { font-weight: 400; font-size: 15px; }
.fund { height: 18.5px; line-height: 18.5px; display: grid; grid-template-columns: 158px 31px; padding-left: 1px; position: relative; }
.fund span { position: absolute; left: 1px; font-size: 15px; }
.ticks { flex: none; height: 415px; margin-top: -1px; padding-top: 0; border-bottom: 1px solid #c00000; }
.tick { height: 18px; line-height: 18px; display: grid; grid-template-columns: 42px 46px 52px 21px 28px; padding-left: 2px; font-size: 13.5px; font-weight: 700; }
.tick span { color: #b8b8b8; }
.tick b { color: #ff3232; text-align: right; }
.tick em { color: #c8c800; text-align: right; }
.tick .big-v { color: #c000c0; }
.tick u { text-decoration: none; padding-left: 9px; }
.tick .bb { color: #ff3232; }
.tick .ss { color: #00ff00; }
.tick s { text-decoration: none; text-align: right; color: #808080; }
.qtabs { height: 18px; flex: none; display: flex; font-size: 14px; line-height: 16px; }
.qtabs a { width: 24px; text-align: center; border-right: 1px solid #a00000; }
.qtabs .on { background: #102020; color: #00ffff; }

/* icon strip */
.iconbar { width: 24px; flex: none; height: 927px; background: #f0f0f0; display: flex; flex-direction: column; align-items: center; }
.iconbar > svg { width: 16px; height: 16px; margin: 3.5px 0; flex: none; }
.iconbar hr { width: 22px; border: 0; border-top: 1px solid #b0b0b0; margin: 3px 0; flex: none; height: 0; }
.ibox { width: 16px; height: 16px; margin: 3.5px 0; border: 1px solid #2080d8; background: #fff; font-size: 9px; line-height: 14px; text-align: center; color: #1060c0; flex: none; white-space: nowrap; overflow: hidden; }
.ibox.org { background: #f08830; color: #fff; }
.ibox.grn2 { border-color: #208080; border-radius: 5px; color: #104080; }
.rsi { height: 23px; line-height: 23px; font-size: 10px; font-weight: 700; color: #3030d0; flex: none; }
.periods { display: flex; flex-direction: column; width: 100%; margin-top: -1px; border-bottom: 1px solid #b0b0b0; }
.periods a { height: 23px; line-height: 23px; text-align: center; color: #103090; font-size: 13px; }
.periods .on { background: #fafafa; border-top: 1px solid #c0c0c0; border-bottom: 1px solid #c0c0c0; line-height: 21px; }

/* status bar */
.status { height: 22px; flex: none; background: #f0f0f0; color: #000; display: flex; align-items: center; position: relative; font-size: 13px; border-top: 1px solid #fff; white-space: nowrap; }
.idx { width: 215px; flex: none; display: grid; grid-template-columns: 26px 58px 38px 49px 44px; align-items: baseline; }
.idx b { color: #f00000; font-size: 13px; }
.idx small { font-size: 12px; color: #000; }
.idx small i { font-size: 13px; }
.idx:nth-child(5) { width: 218px; }
.meter { width: 110px; height: 22px; padding: 2px 0 0 3px; border-left: 1px solid #b0b0b0; border-right: 1px solid #b0b0b0; flex: none; }
.broker { margin-left: 3px; font-size: 14px; }
.trayicons { margin-left: auto; width: 103px; display: flex; align-items: center; justify-content: space-between; padding-right: 5px; }

/* overlays */
.watermark { position: absolute; left: 768px; top: 504px; font-size: 25px; line-height: 28px; font-weight: 700; color: #d80000; white-space: nowrap; letter-spacing: .9px; }
.tooltip { position: absolute; left: 670px; top: 1008px; width: 132px; height: 23px; line-height: 21px; padding-left: 5px; font-size: 14px; color: #405060; background: linear-gradient(#fff, #e4e8f0); border: 1px solid #a0a8b8; border-radius: 3px; box-shadow: 1px 1px 2px #808080; white-space: nowrap; }
.slider { position: absolute; left: 1908px; top: 620px; width: 11px; height: 66px; background: linear-gradient(90deg, #909090, #404040); border-radius: 3px; padding: 5px 3px 0 4px; }
.slider span { display: block; width: 2px; height: 55px; background: linear-gradient(#e03020, #e8b020 55%, #30c030); }
.cpu { position: absolute; left: 1877px; top: 633px; width: 31px; height: 25px; background: #f09020; color: #fff; font-weight: 700; font-size: 12px; line-height: 25px; padding-left: 2px; clip-path: polygon(0 50%, 25% 0, 70% 0, 100% 50%, 70% 100%, 25% 100%); white-space: nowrap; }
.cpu small { font-size: 8px; }
```

FILE: script.js
```js
(function () {
  var RED = '#ff3232', CY = '#54fcfc', AX = '#d02020', VL = '#a01818';
  var VX = [98, 404, 636, 856, 943, 1250, 1556];
  var z9 = function (v) { return v / 1.742; };
  var z10 = function (v) { return 900 + v / 1.96; };
  var z11 = function (v) { return 800 + v / 1.742; };
  var yM = function (v) { return 85 + v / 3; };
  var yS = function (v) { return 345 + v / 3; };
  var bx = function (k) { return Math.round(1600 - 14.59 * k); };
  var rect = function (x, y, w, h, f, s) {
    return '<rect x="' + x + '" y="' + y + '" width="' + w + '" height="' + h + '" fill="' + (f || 'none') + '"' + (s ? ' stroke="' + s + '"' : '') + '/>';
  };
  var line = function (a, b, c, d, s, w, dash) {
    return '<line x1="' + a + '" y1="' + b + '" x2="' + c + '" y2="' + d + '" stroke="' + s + '" stroke-width="' + (w || 1) + '"' + (dash ? ' stroke-dasharray="' + dash + '"' : '') + '/>';
  };
  var poly = function (pts, s, w) {
    return '<polyline points="' + pts.map(function (p) { return p[0].toFixed(1) + ',' + p[1].toFixed(1); }).join(' ') + '" fill="none" stroke="' + s + '" stroke-width="' + (w || 1) + '"/>';
  };
  var text = function (x, y, t, f, anchor, size) {
    return '<text x="' + x + '" y="' + y + '" fill="' + f + '" font-size="' + (size || 13) + '" text-anchor="' + (anchor || 'end') + '">' + t + '</text>';
  };
  var pairs = function (arr, fx, fy) {
    var o = [];
    for (var i = 0; i < arr.length; i += 2) o.push([fx(arr[i]), fy(arr[i + 1])]);
    return o;
  };
  var vlines = function (y1, y2) {
    return VX.map(function (x) { return line(x + .5, y1, x + .5, y2, VL, 1, '1 3'); }).join('');
  };
  var axis = function (top, bot, labels, sub) {
    var s = line(1651.5, top, 1651.5, bot, AX);
    labels.forEach(function (l) {
      s += line(1651, l[0] + .5, 1660, l[0] + .5, AX);
      s += text(1700, l[0] + 5, l[1], AX, 'end', 13);
    });
    (sub || []).forEach(function (y) { s += line(1651, y + .5, 1656, y + .5, AX); });
    return s;
  };
  var candle = function (x, t, b, hi, lo, ty) {
    var s = '', col = (ty === 'c') ? CY : (ty === 'w') ? '#fff' : (ty === 'y') ? '#ff0' : RED;
    x = Math.round(x);
    if (hi != null) s += line(x + .5, hi, x + .5, lo, col);
    if (ty === 'r') s += rect(x - 5 + .5, Math.round(t) + .5, 11, Math.max(1, Math.round(b - t)), '#000', RED);
    else if (ty === 'Y') {
      s += rect(x - 5 + .5, Math.round(t) + .5, 11, Math.round(b - t), '#000', RED);
      s += rect(x - 2, Math.round(t) + 1, 5, Math.round(b - t) - 1, '#ff0');
    }
    else s += rect(x - 5, Math.round(t), 12, Math.max(2, Math.round(b - t)), col);
    return s;
  };

  /* ---------- main chart ---------- */
  var right = [
    'r',130,182,130,184,'r',181,221,168,221,'c',215,221,215,236,'r',226,272,226,272,'c',246,269,246,321,'c',250,255,222,255,
    'c',222,261,210,261,'c',210,222,210,222,'r',205,218,197,231,'R',208,210,202,218,'c',190,210,190,218,'r',186,209,168,209,
    'r',211,218,211,230,'r',214,228,214,233,'c',216,224,210,238,'c',172,204,156,204,'r',169,218,169,218,'c',193,196,193,206,
    'r',187,203,180,216,'r',205,221,193,221,'c',192,216,180,216,'R',189,195,175,201,'c',138,183,132,195,'c',132,141,123,161,
    'c',108,134,96,149,'c',106,108,94,134,'c',84,93,60,110,'r',88,113,72,123,'Y',150,215,150,215,'r',222,272,222,274,
    'R',258,263,219,272,'R',261,263,240,272,'r',262,285,259,287,'c',231,281,210,309,'c',240,243,192,248,'R',235,239,207,245,
    'c',207,245,192,267,'r',198,266,185,272,'R',252,257,201,258,'r',250,265,243,267,'r',250,298,232,298,'r',295,338,272,340,
    'r',331,341,322,352,'Y',349,361,349,368
  ];
  var left = [
    'r',700,710,null,null,'R',699,701,null,null,'r',688,700,678,700,'w',687,689,682,690,'c',690,692,686,696,'R',690,695,null,null,'c',690,695,null,null,'c',696,703,null,null,
    'y',707,709,null,null,'y',705,707,null,null,'c',704,706,695,725,'c',712,716,null,null,'c',708,710,704,714,'r',706,712,null,null,'w',702,704,null,null,'R',699,701,null,null,
    'c',699,702,null,null,'R',700,702,null,null,'R',699,701,null,null,'r',690,699,null,null,'R',689,691,null,null,'R',689,691,null,null,'R',687,691,null,null,'c',688,690,684,693,
    'r',684,692,null,null,'R',681,686,null,null,'c',679,681,675,683,'r',675,683,null,null,'r',670,676,null,null,'c',669,671,668,693,'c',675,683,null,null,'r',673,687,null,null,
    'R',669,671,666,671,'r',664,674,null,null,'c',663,665,660,667,'c',666,672,null,null,'r',664,674,null,null,'c',660,662,657,667,'c',663,675,null,null,
    'w',679,681,null,null,'w',677,679,null,null,'R',679,683,null,null,'R',678,681,null,null,'c',677,680,null,null,'c',678,681,null,null,'c',678,682,null,null,'w',679,681,null,null,'c',684,690,null,null,
    'c',692,698,null,null,'w',685,687,null,null,'r',692,697,null,null,'r',692,697,null,null,'R',689,695,null,null,'c',690,693,null,null,'r',685,697,null,null,'c',684,688,null,null,'R',687,692,null,null
  ];
  var m = vlines(120, 332);
  var ma = function (lf, rt, col, w) {
    return poly(pairs(lf, z9, yM).concat(pairs(rt, z10, yM)), col, w);
  };
  m += ma([42,731,530,726,800,718,1200,708,1450,707,1545,703], [0,703,100,700,300,675,500,650,680,628,900,600,1100,575,1250,555,1370,544], '#b8b8b8', 1.2);
  m += poly(pairs([655,681,800,672,1000,655,1200,638,1370,628], z10, yM), '#0000ff', 1.5);
  m += ma([42,717,560,713,920,706,1250,700,1545,694], [0,692,120,683,240,665,360,635,500,610,600,590,680,570,800,546,950,520,1100,484,1250,458,1370,436], '#00ff00', 1.2);
  m += ma([42,718,160,716,540,708,900,698,1100,692,1450,685,1545,679], [0,677,60,675,140,655,260,625,350,600,430,575,540,548,620,518,680,497,780,468,900,437,1000,400,1080,375,1180,345,1230,332,1370,289], '#ff00ff', 1.2);
  m += ma([42,710,170,706,400,703,560,700,760,697,900,685,1070,677,1250,678,1450,682,1545,674], [0,672,85,650,170,605,230,560,290,515,350,470,420,413,460,392,510,352,560,320,620,270,680,235,730,220,790,203,850,200,900,195,960,193,1020,187,1075,182,1150,178,1200,190,1250,205,1300,210,1370,212], '#fff', 1.1);
  m += ma([42,715,130,708,250,706,500,703,760,695,1000,685,1250,683,1545,676], [0,672,85,658,200,618,240,598,320,560,370,535,450,503,540,460,620,412,680,375,750,340,860,280,910,258,980,233,1060,212,1120,204,1240,203,1325,205,1370,196], '#ff0', 1.1);
  var i, k;
  for (i = 0; i < left.length; i += 5) {
    k = i / 5;
    m += candle(24 + 14.59 * k, yM(left[i + 1]), yM(left[i + 2]), left[i + 3] == null ? null : yM(left[i + 3]), left[i + 4] == null ? null : yM(left[i + 4]), left[i]);
  }
  for (i = 0; i < right.length; i += 5) {
    k = i / 5;
    m += candle(bx(k), yM(right[i + 1]), yM(right[i + 2]), yM(right[i + 3]), yM(right[i + 4]), right[i]);
  }
  [[44, 403], [45, 451], [46, 496], [47, 535], [48, 574], [49, 607], [50, 637], [51, 664]].forEach(function (d) {
    m += rect(bx(d[0]) - 5, yM(d[1]), 11, 2, '#ff0');
  });
  [496, 730, 774, 830, 845, 861, 877, 891, 904, 918, 934, 948, 962, 1006, 1020, 1078, 1138, 1152, 1166, 1210, 1227, 1268, 1430, 1472, 1605].forEach(function (x) {
    m += '<path d="M' + (x - 3) + ' 109l6 6m0-6l-6 6" stroke="#ff00ff" stroke-width="1.6" fill="none"/>';
  });
  m += '<path d="M1220 102l7 5-7 2m0-9v12" stroke="#b0b0b0" fill="none"/>' + text(1234, 115, '35.50', '#b0b0b0', 'start', 12);
  m += text(178, 329, '9.91', '#909090', 'start', 11) + line(171, 325, 176, 325, '#909090');
  m += '<path d="M856 338l4 5h-8zM852 344h8" fill="' + RED + '" stroke="' + RED + '"/>';
  m += '<path d="M1631 87l5 5-5 5-5-5zM1640 87h8v9h-8zM1644 87v9" fill="none" stroke="#b01010"/>';
  m += axis(83, 346, [[107, '35.00'], [149, '30.00'], [190, '25.00'], [231, '20.00'], [273, '15.00'], [314, '10.00']], [128, 170, 211, 252, 293, 335]);
  document.getElementById('cMain').innerHTML = m;

  /* ---------- volume ---------- */
  var volR = 'r166 r175 c237 r228 c231 c228 c222 c237 r220 r238 c215 r196 r220 r232 c210 c210 r194 c216 r180 r190 c180 r181 c141 c198 c165 c165 c148 r97 r155 r180 r152 r183 r187 c118 c145 r175 c147 r118 r155 r127 r82 r61 r78 r75 r250 r246 r244 r260 R258 R258 R259 R259 r253 c252 r238'.split(' ');
  var volL = 'r244 r244 r196 r220 c238 r244 c238 c240 r250 r250 c245 c245 r252 r250 r250 r250 c250 r250 r247 r235 r250 r248 r238 c250 r248 r247 c248 r240 r235 c231 c243 r244 r244 r244 c240 c245 r245 c243 c234 c248 r252 r252 r247 c250 c252 c252 c252 c252 c243 r243 r252 r256 r252 c254'.split(' ');
  var vbar = function (x, c) {
    var t = Math.round(yS(+c.slice(1))), bot = 432, ty = c[0];
    if (ty === 'r') return rect(x - 5 + .5, t + .5, 11, bot - t, '#000', RED);
    return rect(x - 5, t, 12, bot - t + 1, ty === 'c' ? CY : RED);
  };
  var v = vlines(365, 432);
  volL.forEach(function (c, n) { v += vbar(Math.round(24 + 14.59 * n), c); });
  volR.forEach(function (c, n) { v += vbar(bx(n), c); });
  var sY = function (lf, rt, col, w) { return poly(pairs(lf, z9, yS).concat(pairs(rt, z11, yS)), col, w || 1.2); };
  v += sY([42,250,95,238,130,230,190,226,240,240,430,250,760,240,920,238,1050,245,1250,250,1392,254], [0,252,270,252,300,225,400,85,450,108,510,146,560,143,600,163,680,173,720,152,790,150,870,173,930,177,1000,195,1080,213,1140,213,1240,224,1340,229,1390,205], '#ff0');
  v += sY([42,248,100,240,330,238,430,248,760,243,1100,246,1392,252], [0,250,110,252,270,252,330,215,370,180,440,145,530,118,560,122,620,150,680,158,720,152,830,160,920,164,1000,187,1060,193,1180,214,1260,224,1330,226,1390,217], '#ff00ff');
  v += axis(346, 434, [[365, '30000'], [398, '15000']], [381, 415]);
  v += rect(1652.5, 417.5, 24, 15, 'none', '#c00000') + text(1655, 429, 'X10', '#d03030', 'start', 12);
  document.getElementById('cVol').innerHTML = v;

  /* ---------- ZJLX ---------- */
  var zjR = 'R400 R387 C435 R402 C438 R417 C462 C438 R414 c C459 R413 C441 c C450 C473 R381 C443 R396 c C492 C459 C503 C444 C473 C486 C430 R420 R378 R393 C450 C444 R405 C503 c c C489 R324 R411 C438 R402 R408 R417 C525 C437 C437 C437 C432 C430 c c c r C429 R414'.split(' ');
  var zjL = 'r c R411 c C429 c C429 C431 c c c C428 c r r c C428 r r r c c r c R421 c c r r C431 C430 R418 c r C428 c r C428 C431 r c c c c C428 c r C428 c C428 r c c C428'.split(' ');
  var zb = function (x, c) {
    var zero = yS(425), ty = c[0], val = c.length > 1 ? yS(+c.slice(1)) : null;
    if (ty === 'r') return rect(x - 5, Math.round(zero) - 1, 12, 2, '#ff0000');
    if (ty === 'c') return rect(x - 5, Math.round(zero) - 1, 12, 2, CY);
    if (ty === 'R') return rect(x - 5, Math.round(val), 12, Math.round(zero - val), '#ff0000');
    return rect(x - 5, Math.round(zero), 12, Math.round(val - zero), CY);
  };
  var z = vlines(452, 519);
  zjL.forEach(function (c, n) { z += zb(Math.round(24 + 14.59 * n), c); });
  zjR.forEach(function (c, n) { z += zb(bx(n), c); });
  z += axis(434, 521, [[455, '15000'], [486, '0.00']], [471, 503]);
  document.getElementById('cZjlx').innerHTML = z;

  /* ---------- ZJQDL ---------- */
  var q = vlines(539, 607);
  q += line(20, 573.5, 1651, 573.5, '#d0d0d0', 1, '1 1');
  var qLeft = [42,685,70,688,93,678,118,688,150,690,190,686,220,690,300,688,360,688,430,686,470,688,510,683,560,688,600,684,625,688,650,681,680,687,720,683,770,690,830,684,860,686,905,690,950,684,1005,692,1050,687,1120,686,1150,688,1290,689,1380,687];
  var qWhite = [0,685,20,680,50,688,180,687,220,698,275,698,300,785,325,680,375,665,400,697,428,675,452,590,478,752,503,688,528,688,553,763,579,668,605,708,630,713,655,658,680,643,707,692,733,682,757,745,783,735,808,702,834,765,860,718,885,750,910,680,935,658,961,702,986,648,1011,732,1037,710,1062,687,1087,702,1112,680,1138,720,1163,682,1189,679,1215,697,1240,722,1265,680,1291,697,1316,665,1341,692,1367,648,1393,662];
  var qYel = [0,685,20,679,50,686,180,686,210,692,275,692,300,748,325,690,375,677,400,697,428,675,452,590,478,748,503,686,528,686,553,750,579,668,605,706,630,716,655,658,680,645,707,690,733,682,757,738,783,733,808,702,834,752,860,718,885,745,910,680,935,658,961,700,986,648,1011,720,1037,705,1062,687,1087,698,1112,680,1138,713,1163,682,1189,679,1215,697,1240,718,1265,680,1291,695,1316,665,1341,690,1367,650,1393,667];
  q += poly(pairs(qLeft, z9, yS).concat(pairs(qWhite, z11, yS)), '#fff', 1);
  q += poly(pairs(qLeft, z9, yS).concat(pairs(qYel, z11, yS)), '#ff0', 1);
  q += axis(521, 609, [[542, '15000'], [573, '0.00']], [558, 590]);
  document.getElementById('cZjqdl').innerHTML = q;

  /* ---------- MACD ---------- */
  var d = vlines(628, 695);
  d += line(20, 678.5, 1651, 678.5, '#d0d0d0', 1, '1 1');
  var sticks = [122,992,147,985,173,972,198,962,224,952,250,945,274,930,300,915,325,912,351,910,376,907,402,912,428,922,452,925,478,940,503,952,528,966,553,988,579,998,707,994,733,988,757,992];
  var down = [630,1012,655,1012,681,1004,834,1020,859,1028,885,1040,910,1047,935,1047,961,1047,986,1048,1011,1047,1037,1050,1062,1048,1087,1045,1113,1038,1138,1038,1163,1035,1189,1032,1215,1032,1240,1040,1265,1038,1291,1040,1316,1040,1341,1025,1367,1012];
  for (i = 0; i < sticks.length; i += 2) d += line(Math.round(z11(sticks[i])) + .5, yS(sticks[i + 1]), Math.round(z11(sticks[i])) + .5, 678, '#e85050');
  for (i = 0; i < down.length; i += 2) d += line(Math.round(z11(down[i])) + .5, 678, Math.round(z11(down[i])) + .5, yS(down[i + 1]), CY);
  d += poly(pairs([42,996,110,992,210,992,300,996,540,998,670,993,900,990,1040,990,1330,1002,1390,1001], z9, yS).concat(pairs([0,1001,85,1001,120,997,170,975,250,942,325,900,380,870,450,850,515,850,560,865,650,883,720,865,770,865,830,880,900,910,1000,935,1100,955,1180,965,1280,990,1350,990,1390,980], z11, yS)), '#fff', 1.3);
  d += poly(pairs([42,995,350,997,900,990,1200,992,1330,998,1390,1000], z9, yS).concat(pairs([0,1000,130,1000,200,985,300,955,400,910,480,878,550,868,650,875,830,875,1000,912,1120,938,1240,962,1320,978,1390,978], z11, yS)), '#ff0', 1.3);
  d += axis(609, 697, [[626, '5.00'], [652, '2.50']], [639, 665]);
  document.getElementById('cMacd').innerHTML = d;

  /* ---------- dates ---------- */
  var t = text(25, 709, '2013年', AX, 'start', 12);
  [[98, '1'], [404, '2'], [636, '3'], [856, '6'], [943, '7'], [1250, '8'], [1556, '9']].forEach(function (p) {
    t += line(p[0] + .5, 697, p[0] + .5, 712, '#c00000') + text(p[0] + 3, 709, p[1], AX, 'start', 12);
  });
  [173, 249, 325, 476, 552, 710, 782, 900, 995, 1060, 1100, 1175, 1330, 1404, 1480].forEach(function (x) {
    t += line(x + .5, 697, x + .5, 701, '#a00000');
  });
  t += line(1651.5, 697, 1651.5, 712, AX) + text(1697, 709, '日线', '#c0c0c0', 'end', 13);
  document.getElementById('cDate').innerHTML = t;
})();
```
